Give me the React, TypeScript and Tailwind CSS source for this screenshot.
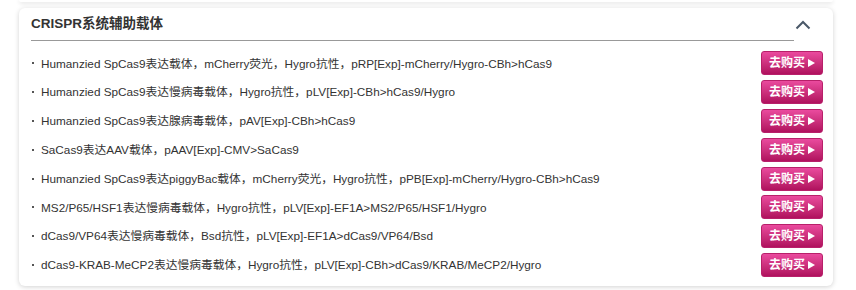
const items = [
  "Humanzied SpCas9表达载体，mCherry荧光，Hygro抗性，pRP[Exp]-mCherry/Hygro-CBh>hCas9",
  "Humanzied SpCas9表达慢病毒载体，Hygro抗性，pLV[Exp]-CBh>hCas9/Hygro",
  "Humanzied SpCas9表达腺病毒载体，pAV[Exp]-CBh>hCas9",
  "SaCas9表达AAV载体，pAAV[Exp]-CMV>SaCas9",
  "Humanzied SpCas9表达piggyBac载体，mCherry荧光，Hygro抗性，pPB[Exp]-mCherry/Hygro-CBh>hCas9",
  "MS2/P65/HSF1表达慢病毒载体，Hygro抗性，pLV[Exp]-EF1A>MS2/P65/HSF1/Hygro",
  "dCas9/VP64表达慢病毒载体，Bsd抗性，pLV[Exp]-EF1A>dCas9/VP64/Bsd",
  "dCas9-KRAB-MeCP2表达慢病毒载体，Hygro抗性，pLV[Exp]-CBh>dCas9/KRAB/MeCP2/Hygro",
];

export default function App() {
  return (
    <div
      className="h-[290px] w-[856px] overflow-hidden bg-white"
      style={{ fontFamily: '"Liberation Sans", Arial, "Noto Sans CJK SC", sans-serif' }}
    >
      <div className="ml-[19px] h-[2px] w-[814px] rounded-b-md shadow-[0_1px_4px_rgba(0,0,0,0.18)]" />
      <div className="ml-[19px] mt-[6px] w-[814px] rounded-md bg-white pb-[7px] shadow-[0_1px_5px_rgba(0,0,0,0.18)]">
        <div className="flex items-center pl-[12px] pr-[22px]">
          <div className="h-[33px] flex-1 border-b border-[#999] pt-[6px] text-[13.5px] font-bold text-[#333]">
            CRISPR系统辅助载体
          </div>
          <svg width="16" height="10" viewBox="0 0 16 10" className="ml-[1px]">
            <path d="M1.5 8.5 L8 2 L14.5 8.5" fill="none" stroke="#4a5868" strokeWidth="2" />
          </svg>
        </div>
        <ul className="mt-[8px] pr-[10px]">
          {items.map((t) => (
            <li key={t} className="flex h-[28.8px] items-center text-[11.75px] text-[#333]">
              <span className="ml-[13px] mr-[7px] inline-block h-[2px] w-[2px] bg-[#555]" />
              <span className="flex-1">{t}</span>
              <button className="flex h-[24px] w-[62px] items-center justify-center gap-[3px] rounded-[3px] border border-[#b8206a] bg-gradient-to-b from-[#ea4a9e] to-[#b0105e] text-[12px] font-bold text-white">
                去购买
                <svg width="7" height="8" viewBox="0 0 7 8">
                  <path d="M0 0 L7 4 L0 8 Z" fill="#fff" />
                </svg>
              </button>
            </li>
          ))}
        </ul>
      </div>
    </div>
  );
}
